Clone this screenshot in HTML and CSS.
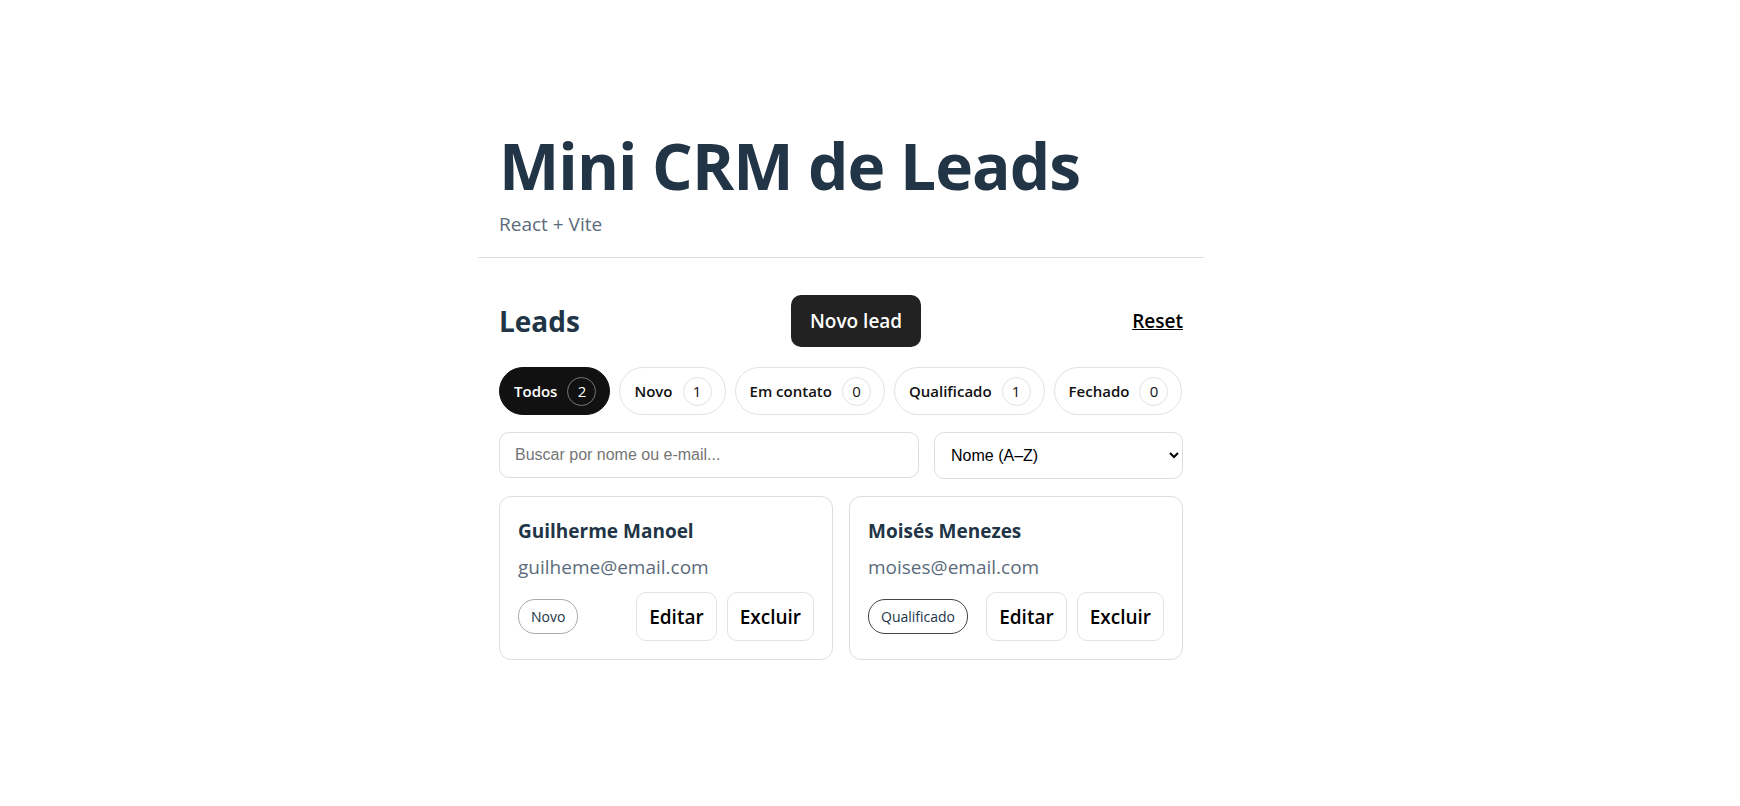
FILE: index.html
```html
<!DOCTYPE html>
<html lang="pt-BR">
<head>
  <meta charset="UTF-8" />
  <meta name="viewport" content="width=device-width, initial-scale=1.0"/>
  <title>Mini CRM de Leads</title>
  <link rel="stylesheet" href="styles.css">
</head>
<body>
  <div class="app">
    <header class="top">
      <h1>Mini CRM de Leads</h1>
      <p class="sub">React + Vite</p>
    </header>

    <main class="main">
      <div class="toolbar">
        <h2>Leads</h2>
        <button class="btn-primary">Novo lead</button>
        <a href="#" class="reset">Reset</a>
      </div>

      <div class="filters">
        <button class="pill active">Todos <span class="count">2</span></button>
        <button class="pill">Novo <span class="count">1</span></button>
        <button class="pill">Em contato <span class="count">0</span></button>
        <button class="pill">Qualificado <span class="count">1</span></button>
        <button class="pill">Fechado <span class="count">0</span></button>
      </div>

      <div class="search-row">
        <input type="text" class="search" placeholder="Buscar por nome ou e-mail...">
        <select class="sort">
          <option>Nome (A–Z)</option>
          <option>Nome (Z–A)</option>
        </select>
      </div>

      <div class="cards">
        <div class="card">
          <h3>Guilherme Manoel</h3>
          <p class="email">guilheme@email.com</p>
          <div class="card-foot">
            <span class="badge">Novo</span>
            <div class="actions">
              <button class="btn">Editar</button>
              <button class="btn">Excluir</button>
            </div>
          </div>
        </div>
        <div class="card">
          <h3>Moisés Menezes</h3>
          <p class="email">moises@email.com</p>
          <div class="card-foot">
            <span class="badge dark">Qualificado</span>
            <div class="actions">
              <button class="btn">Editar</button>
              <button class="btn">Excluir</button>
            </div>
          </div>
        </div>
      </div>
    </main>
  </div>
</body>
</html>
```

FILE: styles.css
```css
body {
  margin: 0;
  font-family: 'Open Sans', 'Noto Sans', sans-serif;
  background: #ffffff;
  color: #213547;
}

.app {
  width: 726px;
  margin-left: 478px;
  padding-top: 126px;
}

.top {
  padding: 0 21px 20px;
  border-bottom: 1px solid #dddddd;
}

.top h1 {
  margin: 0;
  font-size: 64px;
  line-height: 80px;
  font-weight: 700;
  letter-spacing: -1px;
  color: #213547;
}

.sub {
  margin: 5px 0 0;
  font-size: 19px;
  line-height: 26px;
  color: #5b6b7c;
}

.main {
  padding: 37px 21px 0;
}

.toolbar {
  display: flex;
  justify-content: space-between;
  align-items: center;
}

.toolbar h2 {
  margin: 0;
  font-size: 28px;
  font-weight: 700;
  color: #213547;
}

.btn-primary {
  font-family: inherit;
  font-size: 19px;
  font-weight: 600;
  color: #ffffff;
  background: #222222;
  border: none;
  border-radius: 10px;
  height: 52px;
  padding: 0 19px;
}

.reset {
  font-size: 19px;
  font-weight: 600;
  color: #000000;
  text-decoration: underline;
}

.filters {
  display: flex;
  gap: 9px;
  margin-top: 20px;
}

.pill {
  flex: 0 0 auto;
  display: flex;
  align-items: center;
  gap: 10px;
  height: 48px;
  padding: 0 13px 0 14px;
  font-family: inherit;
  font-size: 15px;
  font-weight: 600;
  white-space: nowrap;
  color: #111111;
  background: #ffffff;
  border: 1px solid #e2e2e2;
  border-radius: 24px;
}

.pill.active {
  background: #111111;
  color: #ffffff;
  border-color: #111111;
}

.count {
  display: inline-flex;
  align-items: center;
  justify-content: center;
  width: 29px;
  height: 29px;
  box-sizing: border-box;
  border: 1px solid #e2e2e2;
  border-radius: 50%;
  font-size: 15px;
  font-weight: 500;
}

.pill.active .count {
  border-color: #777777;
}

.search-row {
  display: flex;
  gap: 15px;
  margin-top: 17px;
}

.search {
  flex: 0 0 420px;
  box-sizing: border-box;
  height: 46px;
  padding: 0 15px;
  font-family: 'Liberation Sans', Arial, sans-serif;
  font-size: 16px;
  border: 1px solid #dddddd;
  border-radius: 10px;
  outline: none;
}

.search::placeholder {
  color: #757575;
}

.sort {
  flex: 1;
  height: 47px;
  padding: 0 12px;
  font-family: 'Liberation Sans', Arial, sans-serif;
  font-size: 16px;
  color: #000000;
  background: #ffffff;
  border: 1px solid #dddddd;
  border-radius: 10px;
}

.cards {
  display: grid;
  grid-template-columns: 1fr 1fr;
  gap: 16px;
  margin-top: 17px;
}

.card {
  border: 1px solid #dddddd;
  border-radius: 12px;
  padding: 21px 18px 18px;
}

.card h3 {
  margin: 0;
  font-size: 19px;
  line-height: 26px;
  font-weight: 700;
  color: #213547;
}

.email {
  margin: 10px 0 12px;
  font-size: 19px;
  line-height: 26px;
  color: #5b6b7c;
}

.card-foot {
  display: flex;
  justify-content: space-between;
  align-items: center;
}

.badge {
  display: inline-block;
  padding: 7px 12px;
  font-size: 14px;
  color: #213547;
  border: 1px solid #aaaaaa;
  border-radius: 17px;
}

.badge.dark {
  border-color: #444444;
}

.actions {
  display: flex;
  gap: 10px;
}

.btn {
  height: 49px;
  padding: 0 12px;
  font-family: inherit;
  font-size: 19px;
  font-weight: 600;
  color: #000000;
  background: #ffffff;
  border: 1px solid #e2e2e2;
  border-radius: 10px;
}
```
